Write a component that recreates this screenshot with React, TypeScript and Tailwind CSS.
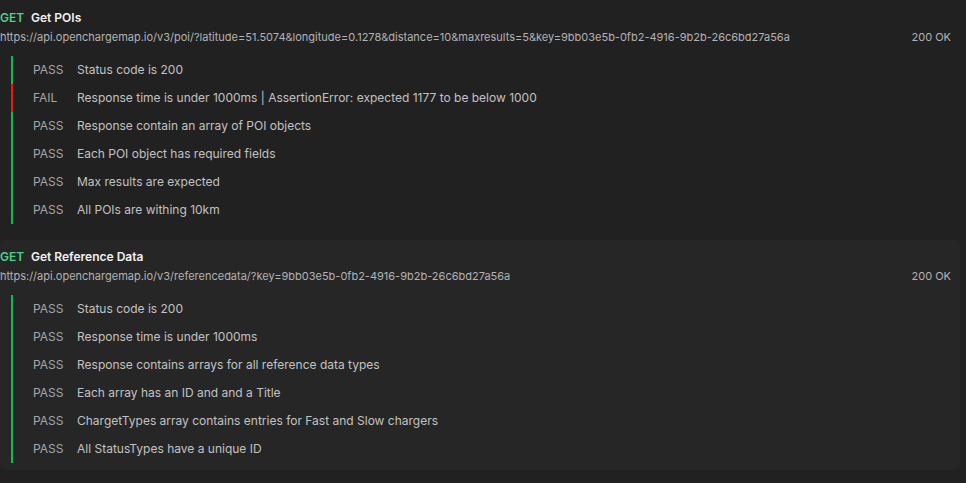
import React from "react";

type Test = { status: "PASS" | "FAIL"; name: string };

const blocks: { title: string; url: string; hover: boolean; tests: Test[] }[] = [
  {
    title: "Get POIs",
    url: "https://api.openchargemap.io/v3/poi/?latitude=51.5074&longitude=0.1278&distance=10&maxresults=5&key=9bb03e5b-0fb2-4916-9b2b-26c6bd27a56a",
    hover: false,
    tests: [
      { status: "PASS", name: "Status code is 200" },
      { status: "FAIL", name: "Response time is under 1000ms | AssertionError: expected 1177 to be below 1000" },
      { status: "PASS", name: "Response contain an array of POI objects" },
      { status: "PASS", name: "Each POI object has required fields" },
      { status: "PASS", name: "Max results are expected" },
      { status: "PASS", name: "All POIs are withing 10km" },
    ],
  },
  {
    title: "Get Reference Data",
    url: "https://api.openchargemap.io/v3/referencedata/?key=9bb03e5b-0fb2-4916-9b2b-26c6bd27a56a",
    hover: true,
    tests: [
      { status: "PASS", name: "Status code is 200" },
      { status: "PASS", name: "Response time is under 1000ms" },
      { status: "PASS", name: "Response contains arrays for all reference data types" },
      { status: "PASS", name: "Each array has an ID and and a Title" },
      { status: "PASS", name: "ChargetTypes array contains entries for Fast and Slow chargers" },
      { status: "PASS", name: "All StatusTypes have a unique ID" },
    ],
  },
];

export default function App() {
  return (
    <div
      className="w-[966px] h-[483px] bg-[#212121] overflow-hidden pt-px pr-[6px] flex flex-col gap-[9px]"
      style={{ fontFamily: "Inter, 'Noto Sans', sans-serif" }}
    >
      {blocks.map((b) => (
        <div
          key={b.title}
          className={`h-[230px] rounded-[4px] pb-[7px] flex flex-col ${b.hover ? "bg-[#262626]" : ""}`}
        >
          <div className="flex items-center h-[32px] pt-[2px] text-[12px] leading-[16px]">
            <span className="font-semibold text-[#4fd08a] w-[31px]">GET</span>
            <span className="font-semibold text-[#f2f2f2]">{b.title}</span>
          </div>
          <div className="flex items-center justify-between h-[8px] pr-[9px] text-[11px] leading-[14px] text-[#b3b3b3]">
            <span className="whitespace-nowrap">{b.url}</span>
            <span className="text-[#b3b3b3]">200 OK</span>
          </div>
          <div className="mt-[15px] ml-[11px] flex flex-col">
            {b.tests.map((t, i) => (
              <div
                key={i}
                className={`h-[28px] flex items-center border-l-2 ${t.status === "PASS" ? "border-[#0cbb52]" : "border-[#e8190f]"}`}
              >
                <span className="w-[44px] ml-[20px] text-[12px] text-[#a6a6a6]">{t.status}</span>
                <span className="text-[12px] text-[#c2c2c2] whitespace-nowrap">{t.name}</span>
              </div>
            ))}
          </div>
        </div>
      ))}
    </div>
  );
}
